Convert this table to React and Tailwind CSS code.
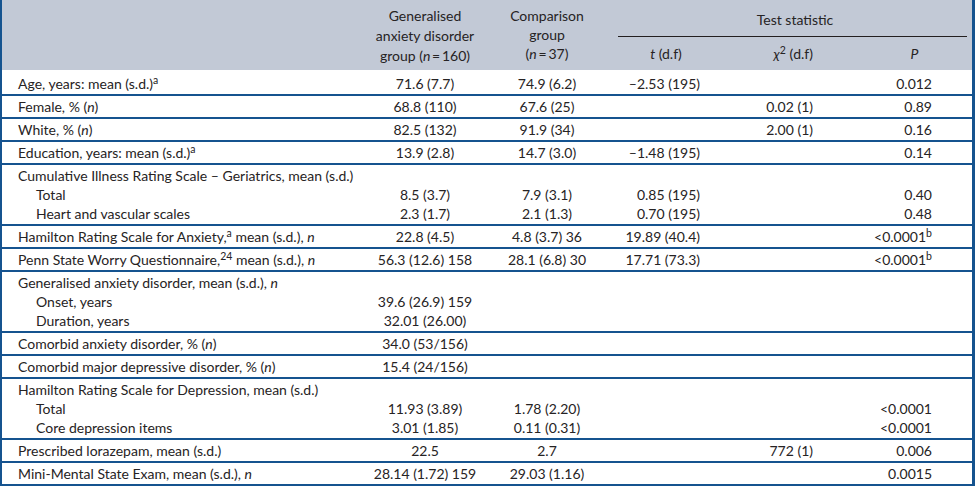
import React from "react";

const cols = "grid grid-cols-[363px_120px_124px_112px_138px_113px]";

const rows = [
  {
    first: true,
    lines: [
      {
        label: (
          <>
            Age, years: mean (s.d.)<sup>a</sup>
          </>
        ),
        gen: "71.6 (7.7)",
        comp: "74.9 (6.2)",
        t: "–2.53 (195)",
        p: "0.012",
      },
    ],
  },
  {
    lines: [
      {
        label: (
          <>
            Female, % (<i>n</i>)
          </>
        ),
        gen: "68.8 (110)",
        comp: "67.6 (25)",
        chi: "0.02 (1)",
        p: "0.89",
      },
    ],
  },
  {
    lines: [
      {
        label: (
          <>
            White, % (<i>n</i>)
          </>
        ),
        gen: "82.5 (132)",
        comp: "91.9 (34)",
        chi: "2.00 (1)",
        p: "0.16",
      },
    ],
  },
  {
    lines: [
      {
        label: (
          <>
            Education, years: mean (s.d.)<sup>a</sup>
          </>
        ),
        gen: "13.9 (2.8)",
        comp: "14.7 (3.0)",
        t: "–1.48 (195)",
        p: "0.14",
      },
    ],
  },
  {
    lines: [
      { label: "Cumulative Illness Rating Scale – Geriatrics, mean (s.d.)" },
      { label: "Total", sub: true, gen: "8.5 (3.7)", comp: "7.9 (3.1)", t: "0.85 (195)", p: "0.40" },
      { label: "Heart and vascular scales", sub: true, gen: "2.3 (1.7)", comp: "2.1 (1.3)", t: "0.70 (195)", p: "0.48" },
    ],
  },
  {
    lines: [
      {
        label: (
          <>
            Hamilton Rating Scale for Anxiety,<sup>a</sup> mean (s.d.), <i>n</i>
          </>
        ),
        gen: "22.8 (4.5)",
        comp: "4.8 (3.7) 36",
        t: "19.89 (40.4)",
        p: (
          <>
            &lt;0.0001<sup>b</sup>
          </>
        ),
      },
    ],
  },
  {
    lines: [
      {
        label: (
          <>
            Penn State Worry Questionnaire,<sup>24</sup> mean (s.d.), <i>n</i>
          </>
        ),
        gen: "56.3 (12.6) 158",
        comp: "28.1 (6.8) 30",
        t: "17.71 (73.3)",
        p: (
          <>
            &lt;0.0001<sup>b</sup>
          </>
        ),
      },
    ],
  },
  {
    lines: [
      {
        label: (
          <>
            Generalised anxiety disorder, mean (s.d.), <i>n</i>
          </>
        ),
      },
      { label: "Onset, years", sub: true, gen: "39.6 (26.9) 159" },
      { label: "Duration, years", sub: true, gen: "32.01 (26.00)" },
    ],
  },
  {
    lines: [
      {
        label: (
          <>
            Comorbid anxiety disorder, % (<i>n</i>)
          </>
        ),
        gen: "34.0 (53/156)",
      },
    ],
  },
  {
    lines: [
      {
        label: (
          <>
            Comorbid major depressive disorder, % (<i>n</i>)
          </>
        ),
        gen: "15.4 (24/156)",
      },
    ],
  },
  {
    lines: [
      { label: "Hamilton Rating Scale for Depression, mean (s.d.)" },
      { label: "Total", sub: true, gen: "11.93 (3.89)", comp: "1.78 (2.20)", p: "<0.0001" },
      { label: "Core depression items", sub: true, gen: "3.01 (1.85)", comp: "0.11 (0.31)", p: "<0.0001" },
    ],
  },
  {
    lines: [
      { label: "Prescribed lorazepam, mean (s.d.)", gen: "22.5", comp: "2.7", chi: "772 (1)", p: "0.006" },
    ],
  },
  {
    lines: [
      {
        label: (
          <>
            Mini-Mental State Exam, mean (s.d.), <i>n</i>
          </>
        ),
        gen: "28.14 (1.72) 159",
        comp: "29.03 (1.16)",
        p: "0.0015",
      },
    ],
  },
];

function Line({ line }) {
  return (
    <div className={`${cols} h-[19px] leading-[19px] whitespace-nowrap`}>
      <div className={line.sub ? "pl-[34px]" : "pl-[16px]"}>{line.label}</div>
      <div className="text-center">{line.gen}</div>
      <div className="text-center">{line.comp}</div>
      <div className="text-right pr-[21px]">{line.t}</div>
      <div className="text-right pr-[46px]">{line.chi}</div>
      <div className="text-right pr-[40px]">{line.p}</div>
    </div>
  );
}

export default function App() {
  return (
    <div className="w-[975px] h-[487px] overflow-hidden bg-white">
      <div
        className="border-l-2 border-r-[3px] border-[#15538f] text-[14px] text-[#262324]"
        style={{ fontFamily: '"Lato", "Liberation Sans", sans-serif' }}
      >
        <div className={`${cols} h-[70px] bg-[#c2c9d6]`}>
          <div />
          <div className="text-center pt-[6px] leading-[20px]">
            Generalised
            <br />
            anxiety disorder
            <br />
            group (<i>n</i>&#8201;=&#8201;160)
          </div>
          <div className="text-center pt-[6px] leading-[19px]">
            Comparison
            <br />
            group
            <br />(<i>n</i>&#8201;=&#8201;37)
          </div>
          <div className="col-span-3 pt-[10px] leading-[20px]">
            <div className="text-center pl-[9px]">Test statistic</div>
            <div className="ml-[9px] mr-[5px] mt-[6px] border-t-[1.5px] border-[#231f20]" />
            <div className="grid grid-cols-[112px_138px_113px] pt-[7px]">
              <div className="text-center pl-[2px]">
                <i>t</i> (d.f)
              </div>
              <div className="text-right pr-[46px]">
                <i>χ</i>
                <sup>2</sup> (d.f)
              </div>
              <div className="text-center pr-[2px]">
                <i>P</i>
              </div>
            </div>
          </div>
        </div>
        {rows.map((r, i) => (
          <div
            key={i}
            className={`border-b-2 border-[#15538f] pb-[1px] ${r.first ? "pt-[4px]" : "pt-[1px]"}`}
          >
            {r.lines.map((l, j) => (
              <Line key={j} line={l} />
            ))}
          </div>
        ))}
      </div>
    </div>
  );
}
